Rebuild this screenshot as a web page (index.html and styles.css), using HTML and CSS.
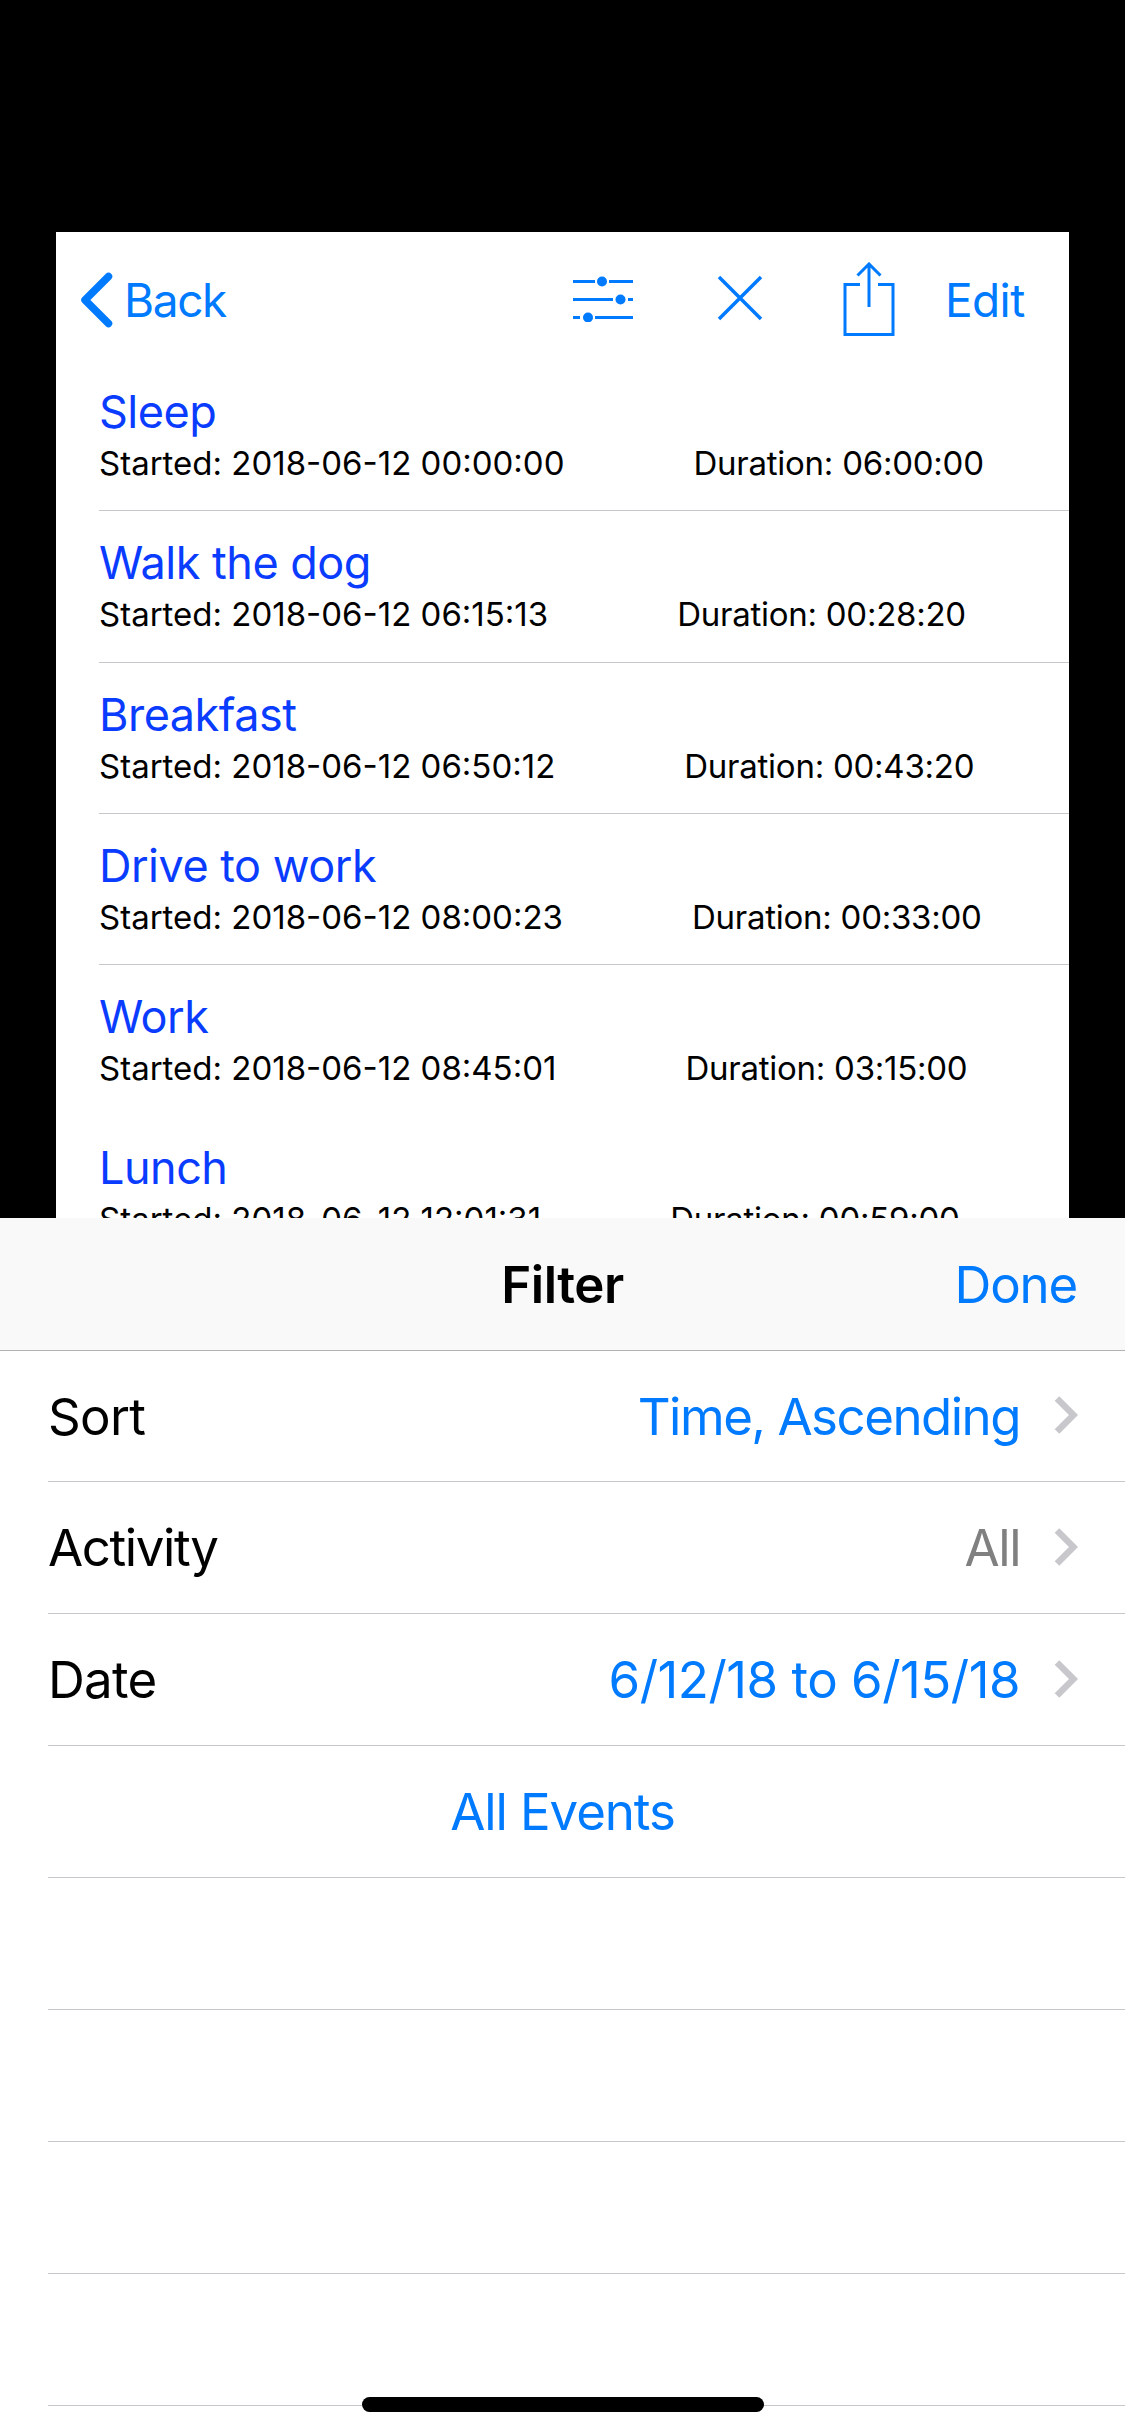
FILE: index.html
```html
<!DOCTYPE html>
<html lang="en">
<head>
<meta charset="utf-8">
<title>Filter</title>
<link rel="stylesheet" href="styles.css">
</head>
<body>
<main class="screen">
  <section class="card">
    <header class="toolbar">
      <svg class="ic ic-back" width="33" height="56" viewBox="0 0 33 56"><path d="M28.500 4.500 5 28l23.500 23.500" fill="none" stroke="#007aff" stroke-width="7.500" stroke-linecap="round" stroke-linejoin="round"/></svg>
      <span class="tool-text back">Back</span>
      <svg class="ic ic-sliders" width="60" height="46" viewBox="0 0 60 46"><g stroke="#007aff" stroke-width="3" fill="none"><path d="M0 5.500h22M36 5.500h24M0 23.500h40M55 23.500h5M0 41.500h7M22 41.500h38"/></g><g fill="#007aff"><circle cx="29" cy="5.500" r="5"/><circle cx="47.500" cy="23.500" r="5"/><circle cx="15" cy="41.500" r="5"/></g></svg>
      <svg class="ic ic-close" width="46" height="46" viewBox="0 0 46 46"><path d="M2 2l42 42M44 2 2 44" fill="none" stroke="#007aff" stroke-width="3.500"/></svg>
      <svg class="ic ic-share" width="52" height="76" viewBox="0 0 52 76"><path d="M17 22.500H2v50h48v-50H35" fill="none" stroke="#007aff" stroke-width="3"/><path d="M26 45V2M14.500 13.500 26 2l11.500 11.500" fill="none" stroke="#007aff" stroke-width="3"/></svg>
      <span class="tool-text edit">Edit</span>
    </header>
    <ul class="events">
      <li class="event"><h2 class="event-title">Sleep</h2><p class="event-meta"><span>Started: 2018-06-12 00:00:00</span><span class="dur">Duration: 06:00:00</span></p></li>
      <li class="event"><h2 class="event-title">Walk the dog</h2><p class="event-meta"><span>Started: 2018-06-12 06:15:13</span><span class="dur">Duration: 00:28:20</span></p></li>
      <li class="event"><h2 class="event-title">Breakfast</h2><p class="event-meta"><span>Started: 2018-06-12 06:50:12</span><span class="dur">Duration: 00:43:20</span></p></li>
      <li class="event"><h2 class="event-title">Drive to work</h2><p class="event-meta"><span>Started: 2018-06-12 08:00:23</span><span class="dur">Duration: 00:33:00</span></p></li>
      <li class="event event-plain"><h2 class="event-title">Work</h2><p class="event-meta"><span>Started: 2018-06-12 08:45:01</span><span class="dur">Duration: 03:15:00</span></p></li>
      <li class="event event-plain"><h2 class="event-title">Lunch</h2><p class="event-meta"><span>Started: 2018-06-12 12:01:31</span><span class="dur">Duration: 00:59:00</span></p></li>
    </ul>
  </section>
  <section class="sheet">
    <header class="sheet-bar">
      <h1 class="sheet-title">Filter</h1>
      <span class="done">Done</span>
    </header>
    <div class="row row-first"><span>Sort</span><span class="value">Time, Ascending</span><svg class="chev" width="24" height="38" viewBox="0 0 24 38"><path d="M3 2.500l16.500 16.500L3 35.500" fill="none" stroke="#c7c7cc" stroke-width="6.500"/></svg></div>
    <div class="row"><span class="label-tight">Activity</span><span class="value muted">All</span><svg class="chev" width="24" height="38" viewBox="0 0 24 38"><path d="M3 2.500l16.500 16.500L3 35.500" fill="none" stroke="#c7c7cc" stroke-width="6.500"/></svg></div>
    <div class="row"><span>Date</span><span class="value value-date">6/12/18 to 6/15/18</span><svg class="chev" width="24" height="38" viewBox="0 0 24 38"><path d="M3 2.500l16.500 16.500L3 35.500" fill="none" stroke="#c7c7cc" stroke-width="6.500"/></svg></div>
    <div class="row row-center">All Events</div>
    <div class="row"></div>
    <div class="row"></div>
    <div class="row"></div>
    <div class="row"></div>
    <div class="home-bar"></div>
  </section>
</main>
</body>
</html>
```
FILE: styles.css
```css
* { box-sizing: border-box; }
html, body { margin: 0; padding: 0; background: #000; }
body { font-family: Inter, Roboto, "Liberation Sans", sans-serif; }
.screen { width: 1125px; height: 2436px; display: flex; flex-direction: column; padding-top: 232px; overflow: hidden; }

.card { height: 986px; margin: 0 56px; background: #fff; overflow: hidden; flex: none; }
.toolbar { height: 128px; display: flex; align-items: flex-start; color: #007aff; }
.ic { flex: none; display: block; }
.ic-back { margin: 40px 0 0 24px; }
.tool-text { font-size: 46px; line-height: 56px; }
.back { margin: 40px 0 0 11px; width: 449px; letter-spacing: -1.4px; }
.ic-sliders { margin-top: 44px; }
.ic-close { margin: 43px 0 0 84px; }
.ic-share { margin: 30px 0 0 80px; }
.edit { margin: 40px 0 0 50px; letter-spacing: -0.6px; }

.events { list-style: none; margin: 0; padding: 0; }
.event { height: 151.3px; margin-left: 43px; padding-top: 24px; border-bottom: 1px solid #c8c7cc; }
.event-plain { border-bottom: 0; }
.event-title { margin: 0; font-size: 45px; font-weight: 400; line-height: 56px; color: #0a3cff; letter-spacing: -0.5px; }
.event-meta { margin: 3px 0 0; display: flex; gap: 129px; font-size: 33px; line-height: 40px; color: #000; }
.dur { letter-spacing: -0.25px; }

.sheet { flex: 1; background: #fff; position: relative; }
.sheet-bar { height: 133px; background: #f9f9f9; border-bottom: 1px solid #b2b2b2; display: flex; align-items: center; justify-content: flex-end; padding-right: 48px; position: relative; }
.sheet-title { position: absolute; left: 0; right: 0; margin: 0; text-align: center; font-size: 51px; font-weight: 600; color: #000; letter-spacing: -0.5px; }
.done { font-size: 51px; color: #007aff; letter-spacing: -1.2px; }
.row { height: 132px; margin-left: 48px; padding-right: 47px; display: flex; align-items: center; font-size: 51px; border-bottom: 1px solid #c8c7cc; color: #000; letter-spacing: -0.7px; }
.row-first { height: 131px; }
.label-tight { letter-spacing: -1.4px; }
.value { margin-left: auto; color: #007aff; margin-right: 34px; letter-spacing: -1.5px; }
.value-date { letter-spacing: -0.5px; }
.muted { color: #808080; }
.chev { flex: none; margin-top: -2px; }
.row-center { justify-content: center; padding-right: 48px; color: #007aff; letter-spacing: -1.1px; }
.home-bar { position: absolute; left: 362px; bottom: 24px; width: 402px; height: 15px; border-radius: 8px; background: #000; }
```
